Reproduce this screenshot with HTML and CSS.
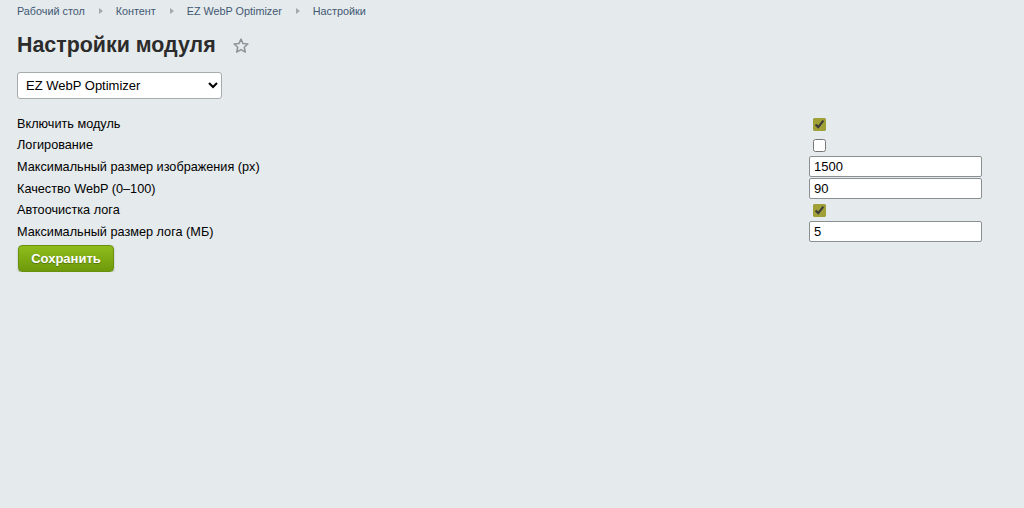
FILE: index.html
```html
<!DOCTYPE html>
<html lang="ru">
<head>
  <meta charset="UTF-8" />
  <title>Настройки модуля</title>
  <link rel="stylesheet" href="styles.css">
</head>
<body>
  <div class="page">
    <div class="navchain">
      <a href="#">Рабочий стол</a>
      <span class="nav-arrow"></span>
      <a href="#">Контент</a>
      <span class="nav-arrow"></span>
      <a href="#">EZ WebP Optimizer</a>
      <span class="nav-arrow"></span>
      <a href="#">Настройки</a>
    </div>

    <div class="title-row">
      <h1>Настройки модуля</h1>
      <svg class="fav-star" width="18" height="18" viewBox="0 0 24 24">
        <path d="M12 2.8l2.7 6 6.5.6-4.9 4.3 1.5 6.4L12 16.8l-5.8 3.3 1.5-6.4-4.9-4.3 6.5-.6z" fill="none" stroke="#8d9499" stroke-width="2" stroke-linejoin="round"/>
      </svg>
    </div>

    <select class="module-select">
      <option>EZ WebP Optimizer</option>
    </select>

    <form class="settings">
      <label class="field-label">Включить модуль</label>
      <div class="field-value"><input type="checkbox" checked></div>

      <label class="field-label">Логирование</label>
      <div class="field-value"><input type="checkbox"></div>

      <label class="field-label">Максимальный размер изображения (px)</label>
      <div class="field-value"><input type="text" value="1500"></div>

      <label class="field-label">Качество WebP (0–100)</label>
      <div class="field-value"><input type="text" value="90"></div>

      <label class="field-label">Автоочистка лога</label>
      <div class="field-value"><input type="checkbox" checked></div>

      <label class="field-label">Максимальный размер лога (МБ)</label>
      <div class="field-value"><input type="text" value="5"></div>
    </form>

    <button class="save-button" type="button">Сохранить</button>
  </div>
</body>
</html>
```

FILE: styles.css
```css
body {
  margin: 0;
  background: #e5eaec;
  font-family: Arial, "Liberation Sans", sans-serif;
  color: #000;
  font-size: 12.7px;
}

.page {
  padding: 4px 42px 0 17px;
}

.navchain {
  display: flex;
  align-items: center;
  height: 14px;
  font-size: 10.8px;
}

.navchain a {
  color: #3f5873;
  text-decoration: none;
}

.nav-arrow {
  width: 0;
  height: 0;
  margin: 0 13px 0 14px;
  border-top: 3px solid transparent;
  border-bottom: 3px solid transparent;
  border-left: 4px solid #a2a9ad;
}

.title-row {
  display: flex;
  align-items: center;
  margin-top: 14px;
  height: 26px;
}

h1 {
  margin: 0;
  font-size: 21.4px;
  font-weight: bold;
  color: #2c2c2c;
}

.fav-star {
  margin-left: 16px;
  margin-top: 2px;
}

.module-select {
  display: block;
  margin-top: 14px;
  width: 205px;
  height: 27px;
  padding: 0 4px 0 4px;
  font-family: Arial, "Liberation Sans", sans-serif;
  font-size: 13px;
  color: #000;
  background: #fff;
  border: 1px solid #a6abae;
  border-radius: 3px;
}

.settings {
  display: grid;
  grid-template-columns: 1fr 173px;
  margin-top: 15px;
  row-gap: 1px;
}

.field-label {
  display: flex;
  align-items: center;
  min-height: 20px;
}

.field-value {
  display: flex;
  align-items: center;
  min-height: 20px;
}

.field-value input[type="checkbox"] {
  margin: 0 0 0 4px;
  width: 13px;
  height: 13px;
  accent-color: #a0a036;
}

.field-value input[type="text"] {
  width: 100%;
  box-sizing: border-box;
  height: 21px;
  padding: 0 4px;
  font-family: Arial, "Liberation Sans", sans-serif;
  font-size: 13px;
  color: #000;
  background: #fff;
  border: 1px solid #8a8f92;
  border-radius: 2px;
}

.save-button {
  margin: 3px 0 0 1px;
  width: 96px;
  height: 27px;
  font-family: Arial, "Liberation Sans", sans-serif;
  font-size: 13px;
  font-weight: bold;
  color: #fff;
  text-shadow: 0 1px 1px rgba(0, 0, 0, 0.3);
  background: linear-gradient(to bottom, #8fbc1b, #6e9a0b);
  border: 1px solid #6a9010;
  border-radius: 4px;
  box-shadow: 0 1px 2px rgba(0, 0, 0, 0.25);
  cursor: pointer;
}
```
